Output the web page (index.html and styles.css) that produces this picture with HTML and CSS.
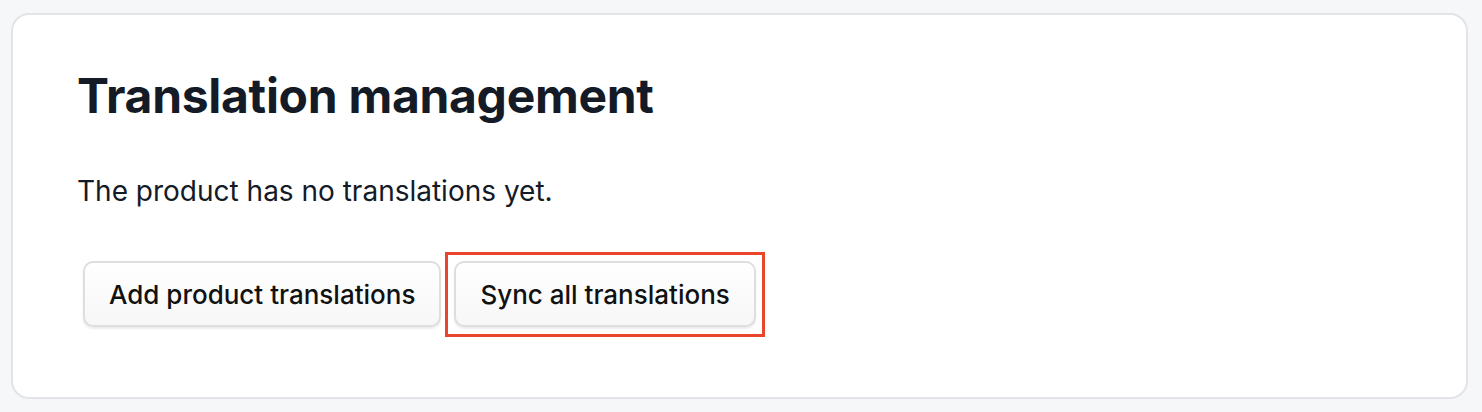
FILE: index.html
```html
<!DOCTYPE html>
<html>
<head>
<meta charset="utf-8">
<link rel="stylesheet" href="styles.css">
</head>
<body>
<div class="page">
  <section class="card">
    <h1 class="title">Translation management</h1>
    <p class="body">The product has no translations yet.</p>
    <div class="actions">
      <button class="btn">Add product translations</button>
      <button class="btn btn-highlight">Sync all translations</button>
    </div>
  </section>
</div>
</body>
</html>
```
FILE: styles.css
```css
html, body {
  margin: 0;
  padding: 0;
  background: #f6f7f9;
  font-family: Inter, "Noto Sans", sans-serif;
}
.page {
  padding: 13px 14px 13px 11px;
}
.card {
  box-sizing: border-box;
  height: 386px;
  background: #ffffff;
  border: 2px solid #e3e4e8;
  border-radius: 18px;
  padding: 53px 64px 0 64px;
}
.title {
  margin: 0;
  font-size: 48px;
  font-weight: 700;
  line-height: 56px;
  color: #141a26;
  letter-spacing: -0.3px;
}
.body {
  margin: 49px 0 0 0;
  font-size: 28px;
  line-height: 36px;
  color: #141a26;
}
.actions {
  display: flex;
  gap: 13px;
  margin-top: 52px;
  padding-left: 6px;
}
.btn {
  position: relative;
  box-sizing: border-box;
  height: 66px;
  padding: 0 24px;
  font-family: Inter, "Noto Sans", sans-serif;
  font-size: 26px;
  font-weight: 500;
  color: #111111;
  background: linear-gradient(#ffffff, #f7f7f7);
  border: 2px solid #dedede;
  border-radius: 10px;
  box-shadow: 0 2px 2px rgba(0,0,0,0.08);
}
.btn-highlight::after {
  content: "";
  position: absolute;
  top: -11px;
  left: -11px;
  right: -11px;
  bottom: -12px;
  border: 3px solid #e8452b;
  pointer-events: none;
}
```
